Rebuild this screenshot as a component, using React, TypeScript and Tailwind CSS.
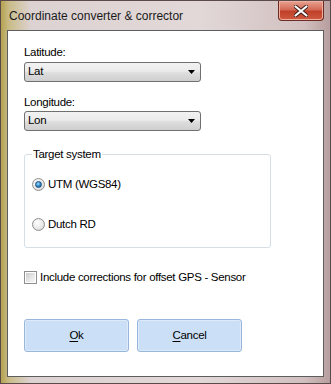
import { useState } from "react";

const FONT = "font-['Segoe_UI','Liberation_Sans',Arial,sans-serif]";

function Select({ value }: { value: string }) {
  return (
    <div className="flex h-[20px] w-[177px] items-center justify-between rounded-[3px] border border-[#707070] bg-[linear-gradient(#f2f2f2_0%,#ebebeb_45%,#dddddd_55%,#cfcfcf_100%)] pl-[3px] pr-[5px] text-black">
      <span>{value}</span>
      <svg width="7" height="4" viewBox="0 0 7 4">
        <path d="M0 0H7L3.5 4Z" fill="#000" />
      </svg>
    </div>
  );
}

function Radio({ checked, label }: { checked: boolean; label: string }) {
  return (
    <div className="flex items-center gap-[3px] leading-[16px]">
      <span className="flex h-[13px] w-[13px] items-center justify-center rounded-full border border-[#8e8f8f] bg-[radial-gradient(circle_at_40%_35%,#ffffff_0%,#e6e6e6_60%,#c8c8c8_100%)]">
        {checked && (
          <span className="h-[7px] w-[7px] rounded-full border border-[#1c5180] bg-[radial-gradient(circle_at_40%_35%,#9fd8f8_0%,#2a87c8_55%,#0c4f8a_100%)]" />
        )}
      </span>
      <span>{label}</span>
    </div>
  );
}

function Button({ access, rest }: { access: string; rest: string }) {
  return (
    <button className="flex h-[33px] w-[105px] items-center justify-center rounded-[3px] border border-[#98b7dc] bg-[#cbdff6] text-black shadow-[inset_0_0_0_1px_#dfeaf8]">
      <span>
        <span className="underline underline-offset-2">{access}</span>
        {rest}
      </span>
    </button>
  );
}

export default function App() {
  const [checked] = useState(false);
  return (
    <div
      className={`${FONT} flex h-[384px] w-[331px] flex-col border border-[#5a4a4a] bg-[linear-gradient(90deg,#b5a250_0px,#c9bc88_8px,#ddd2d2_30px,#e2d8d8_60%,#d2c0c0_92%,#b89e9e_100%)] text-black`}
    >
      <div className="flex h-[29px] shrink-0 items-start justify-between">
        <div className="pl-[8px] pt-[6px] text-[12px] text-[#1a1a1a]">
          Coordinate converter &amp; corrector
        </div>
        <div className="mr-[6px] flex h-[20px] w-[46px] items-center justify-center rounded-b-[4px] border border-t-0 border-[#6b2b22] bg-[linear-gradient(#e8a394_0%,#d46a55_45%,#c0402a_55%,#cf5a3f_100%)] shadow-[inset_0_0_0_1px_#f0b0a0]">
          <svg width="14" height="12" viewBox="0 0 14 12">
            <path
              d="M1.5 1.5L12.5 10.5M12.5 1.5L1.5 10.5"
              stroke="#3b1f1a"
              strokeWidth="4"
              strokeLinecap="round"
            />
            <path
              d="M1.5 1.5L12.5 10.5M12.5 1.5L1.5 10.5"
              stroke="#ffffff"
              strokeWidth="2.2"
              strokeLinecap="round"
            />
          </svg>
        </div>
      </div>
      <div className="mx-[6px] mb-[6px] flex flex-1 flex-col border border-[#5e5e5e] bg-white pl-[16px] pt-[14px] text-[11.5px] tracking-[-0.3px]">
        <div className="leading-[14px]">Latitude:</div>
        <div className="mt-[3px]">
          <Select value="Lat" />
        </div>
        <div className="mt-[13px] leading-[14px]">Longitude:</div>
        <div className="mt-[2px]">
          <Select value="Lon" />
        </div>
        <fieldset className="mt-[16px] h-[101px] w-[247px] rounded-[3px] border border-[#d5dfe5] px-[7px]">
          <legend className="px-[1px] leading-[14px]">Target system</legend>
          <div className="mt-[15px] flex flex-col gap-[24px]">
            <Radio checked label="UTM (WGS84)" />
            <Radio checked={false} label="Dutch RD" />
          </div>
        </fieldset>
        <label className="mt-[21px] flex items-center gap-[3px] leading-[16px]">
          <span className="flex h-[13px] w-[13px] items-center justify-center border border-[#8e8f8f] bg-white">
            <span
              className={`h-[9px] w-[9px] ${checked ? "bg-[#2a87c8]" : "bg-[linear-gradient(135deg,#cbcbcb_0%,#e9e9e9_60%,#f4f4f4_100%)]"}`}
            />
          </span>
          <span>Include corrections for offset GPS - Sensor</span>
        </label>
        <div className="mt-[34px] flex gap-[8px]">
          <Button access="O" rest="k" />
          <Button access="C" rest="ancel" />
        </div>
      </div>
    </div>
  );
}
